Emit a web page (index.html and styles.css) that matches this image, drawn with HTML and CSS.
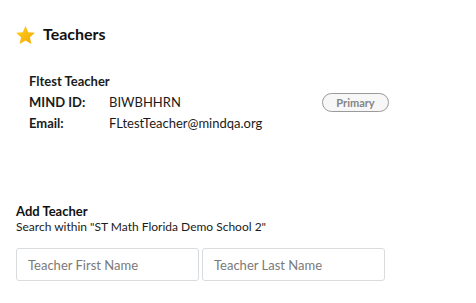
FILE: index.html
```html
<!DOCTYPE html>
<html>
<head>
<meta charset="utf-8">
<link rel="stylesheet" href="styles.css">
</head>
<body>
<div class="page">
  <div class="header">
    <svg class="star" width="19" height="18" viewBox="1 1.2 22 20.8">
      <defs>
        <linearGradient id="sg" x1="0" y1="0" x2="1" y2="1">
          <stop offset="0" stop-color="#ffd21f"/>
          <stop offset="1" stop-color="#f2a600"/>
        </linearGradient>
      </defs>
      <path d="M12 1.2l3.2 7.1 7.7.8-5.8 5.2 1.7 7.6L12 18l-6.8 3.9 1.7-7.6L1.1 9.1l7.7-.8z" fill="url(#sg)"/>
    </svg>
    <h2 class="title">Teachers</h2>
  </div>

  <div class="teacher">
    <div class="name">Fltest Teacher</div>
    <div class="label">MIND ID:</div>
    <div class="value">BIWBHHRN</div>
    <div class="badge-cell"><span class="badge">Primary</span></div>
    <div class="label">Email:</div>
    <div class="value">FLtestTeacher@mindqa.org</div>
  </div>

  <div class="add">
    <div class="add-title">Add Teacher</div>
    <div class="add-sub">Search within "ST Math Florida Demo School 2"</div>
    <div class="inputs">
      <input class="field" type="text" placeholder="Teacher First Name">
      <input class="field" type="text" placeholder="Teacher Last Name">
    </div>
  </div>
</div>
</body>
</html>
```
FILE: styles.css
```css
* { box-sizing: border-box; }
html, body { margin: 0; background: #fff; }
body {
  font-family: Lato, "Open Sans", sans-serif;
  color: #1b1b1b;
}
.page {
  padding: 24px 0 0 16px;
}
.header {
  display: flex;
  align-items: center;
  gap: 8px;
  height: 20px;
}
.star { display: block; flex: none; margin-top: 1px; }
.title {
  margin: 0;
  font-size: 16px;
  line-height: 20px;
  font-weight: 700;
  color: #111;
}
.teacher {
  margin-top: 27px;
  padding-left: 13px;
  display: grid;
  grid-template-columns: 80px 213px auto;
  font-size: 13px;
  line-height: 21px;
}
.name {
  grid-column: 1 / -1;
  font-weight: 700;
}
.label { font-weight: 700; }
.value { font-weight: 400; }
.badge-cell {
  display: flex;
  align-items: center;
}
.badge {
  display: inline-block;
  width: 67px;
  height: 19px;
  border: 1px solid #9a9a9a;
  border-radius: 10px;
  background: #f7f7f7;
  color: #858585;
  font-size: 11px;
  font-weight: 700;
  line-height: 17px;
  text-align: center;
}
.add {
  margin-top: 69px;
}
.add-title {
  font-size: 13px;
  line-height: 16px;
  font-weight: 700;
  color: #111;
}
.add-sub {
  font-size: 12px;
  line-height: 16px;
}
.inputs {
  margin-top: 13px;
  display: flex;
  gap: 3px;
}
.field {
  width: 183px;
  height: 33px;
  margin: 0;
  padding: 0 11px;
  border: 1px solid #d9dcdf;
  border-radius: 3px;
  font-family: Lato, sans-serif;
  font-size: 13px;
  color: #333;
  background: #fff;
}
.field::placeholder { color: #7a7a7a; }
```
